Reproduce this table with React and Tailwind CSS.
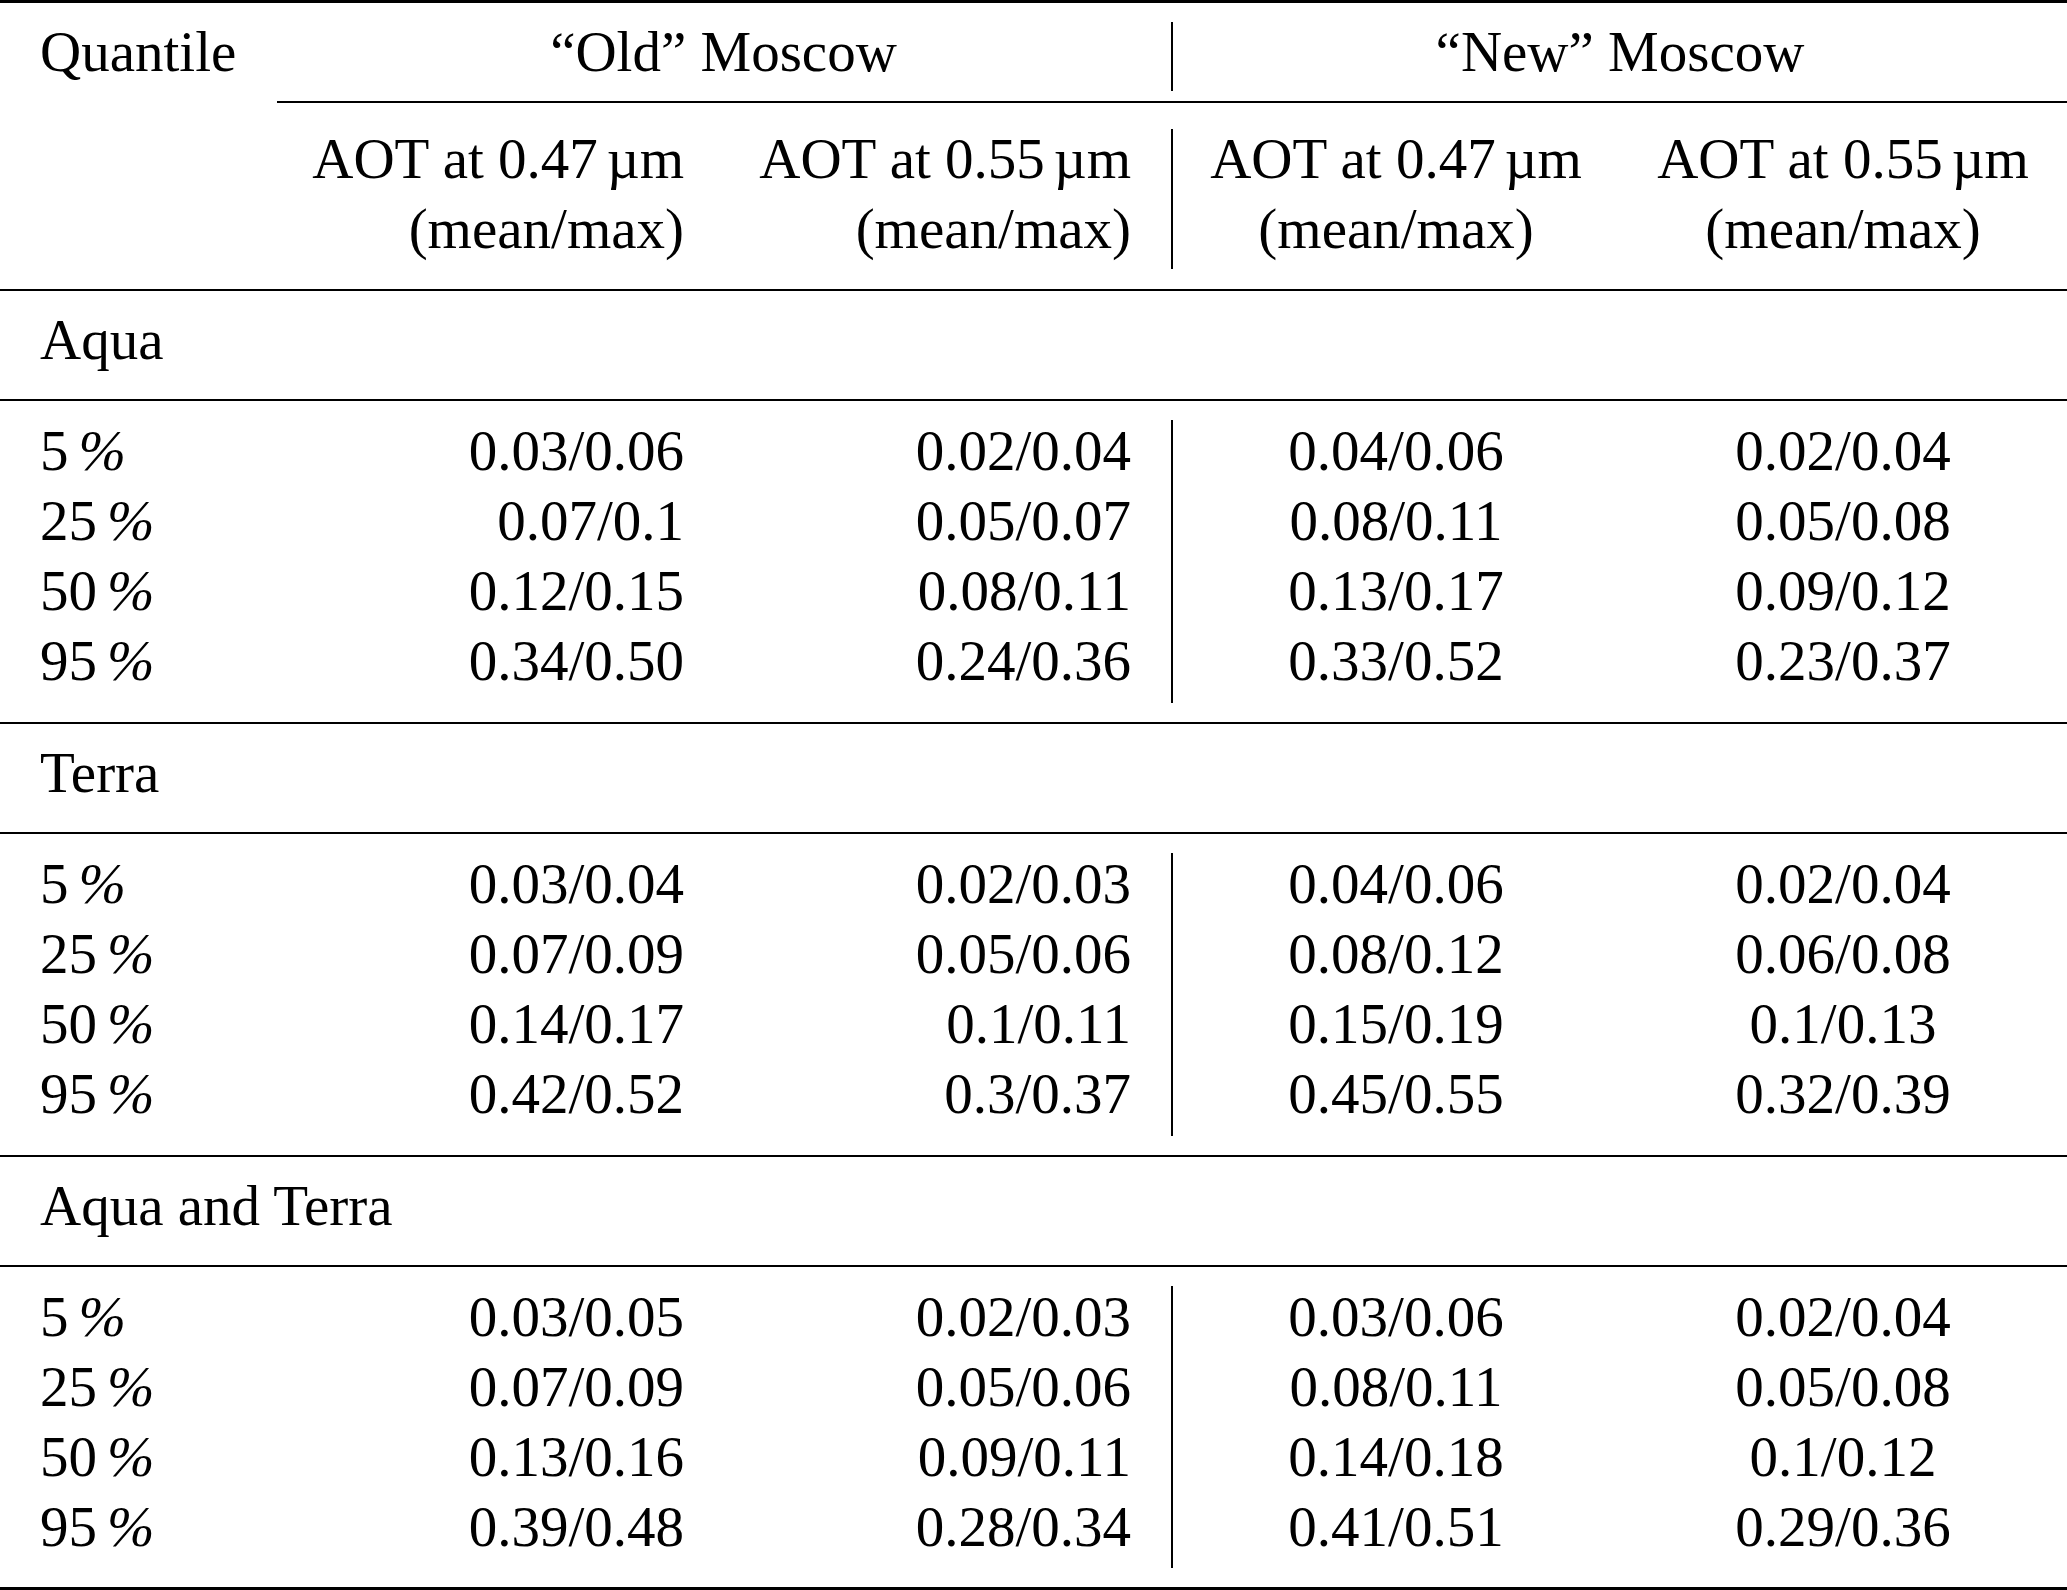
import React from 'react';

const sections = [
  {
    name: 'Aqua',
    rows: [
      ['5', '0.03/0.06', '0.02/0.04', '0.04/0.06', '0.02/0.04'],
      ['25', '0.07/0.1', '0.05/0.07', '0.08/0.11', '0.05/0.08'],
      ['50', '0.12/0.15', '0.08/0.11', '0.13/0.17', '0.09/0.12'],
      ['95', '0.34/0.50', '0.24/0.36', '0.33/0.52', '0.23/0.37']
    ]
  },
  {
    name: 'Terra',
    rows: [
      ['5', '0.03/0.04', '0.02/0.03', '0.04/0.06', '0.02/0.04'],
      ['25', '0.07/0.09', '0.05/0.06', '0.08/0.12', '0.06/0.08'],
      ['50', '0.14/0.17', '0.1/0.11', '0.15/0.19', '0.1/0.13'],
      ['95', '0.42/0.52', '0.3/0.37', '0.45/0.55', '0.32/0.39']
    ]
  },
  {
    name: 'Aqua and Terra',
    rows: [
      ['5', '0.03/0.05', '0.02/0.03', '0.03/0.06', '0.02/0.04'],
      ['25', '0.07/0.09', '0.05/0.06', '0.08/0.11', '0.05/0.08'],
      ['50', '0.13/0.16', '0.09/0.11', '0.14/0.18', '0.1/0.12'],
      ['95', '0.39/0.48', '0.28/0.34', '0.41/0.51', '0.29/0.36']
    ]
  }
];

const Rule = () => <div className="h-[2px] bg-black" />;

// vertical separator between "Old" and "New" Moscow
const Divider = ({ className = '' }) => <div className={`w-[2px] bg-black ${className}`} />;

const HeaderCell = ({ wl, align }) => (
  <div className={`pt-[21px] pb-[25px] flex flex-col ${align}`}>
    <div>
      AOT at {wl}
      <span className="ml-[9px]">µm</span>
    </div>
    <div>(mean/max)</div>
  </div>
);

const Section = ({ section, last }) => {
  const pad = last ? 'pt-[15px] pb-[25px]' : 'pt-[15px] pb-[26px]';
  const col = (i, align) => (
    <div className={`${pad} flex flex-col ${align}`}>
      {section.rows.map((r) => (
        <div key={r[0]}>{r[i]}</div>
      ))}
    </div>
  );

  return (
    <>
      <div className="h-[108px] pl-[40px] pt-[14px]">{section.name}</div>
      <Rule />
      <div className="grid grid-cols-[276px_448px_447px_2px_446px_448px]">
        <div className={`${pad} pl-[40px] flex flex-col`}>
          {section.rows.map((r) => (
            <div key={r[0]}>
              {r[0]}
              <span className="ml-[10px] italic">%</span>
            </div>
          ))}
        </div>
        {col(1, 'items-end pr-[40px]')}
        {col(2, 'items-end pr-[40px]')}
        <Divider className="my-[19px]" />
        {col(3, 'items-center')}
        {col(4, 'items-center')}
      </div>
    </>
  );
};

export default function App() {
  return (
    <div className="w-[2067px] h-[1590px] bg-white text-black font-['Liberation_Serif','Times_New_Roman',serif] text-[57px] leading-[70px] flex flex-col overflow-hidden">
      {/* top rule */}
      <div className="h-[3px] bg-black" />

      {/* header row 1 */}
      <div className="grid grid-cols-[276px_895px_2px_894px]">
        <div className="pl-[40px] pt-[14px] pb-[14px]">Quantile</div>
        <div className="pt-[14px] pb-[14px] text-center">{'\u201COld\u201D Moscow'}</div>
        <Divider className="mt-[19px] mb-[10px]" />
        <div className="pt-[14px] pb-[14px] text-center">{'\u201CNew\u201D Moscow'}</div>
      </div>
      <div className="ml-[277px] h-[2px] bg-black" />

      {/* header row 2 */}
      <div className="grid grid-cols-[276px_448px_447px_2px_446px_448px]">
        <div />
        <HeaderCell wl="0.47" align="items-end pr-[40px]" />
        <HeaderCell wl="0.55" align="items-end pr-[40px]" />
        <Divider className="mt-[26px] mb-[20px]" />
        <HeaderCell wl="0.47" align="items-center" />
        <HeaderCell wl="0.55" align="items-center" />
      </div>
      <Rule />

      {sections.map((s, i) => (
        <React.Fragment key={s.name}>
          <Section section={s} last={i === sections.length - 1} />
          {i < sections.length - 1 ? <Rule /> : <div className="h-[3px] bg-black" />}
        </React.Fragment>
      ))}
    </div>
  );
}
